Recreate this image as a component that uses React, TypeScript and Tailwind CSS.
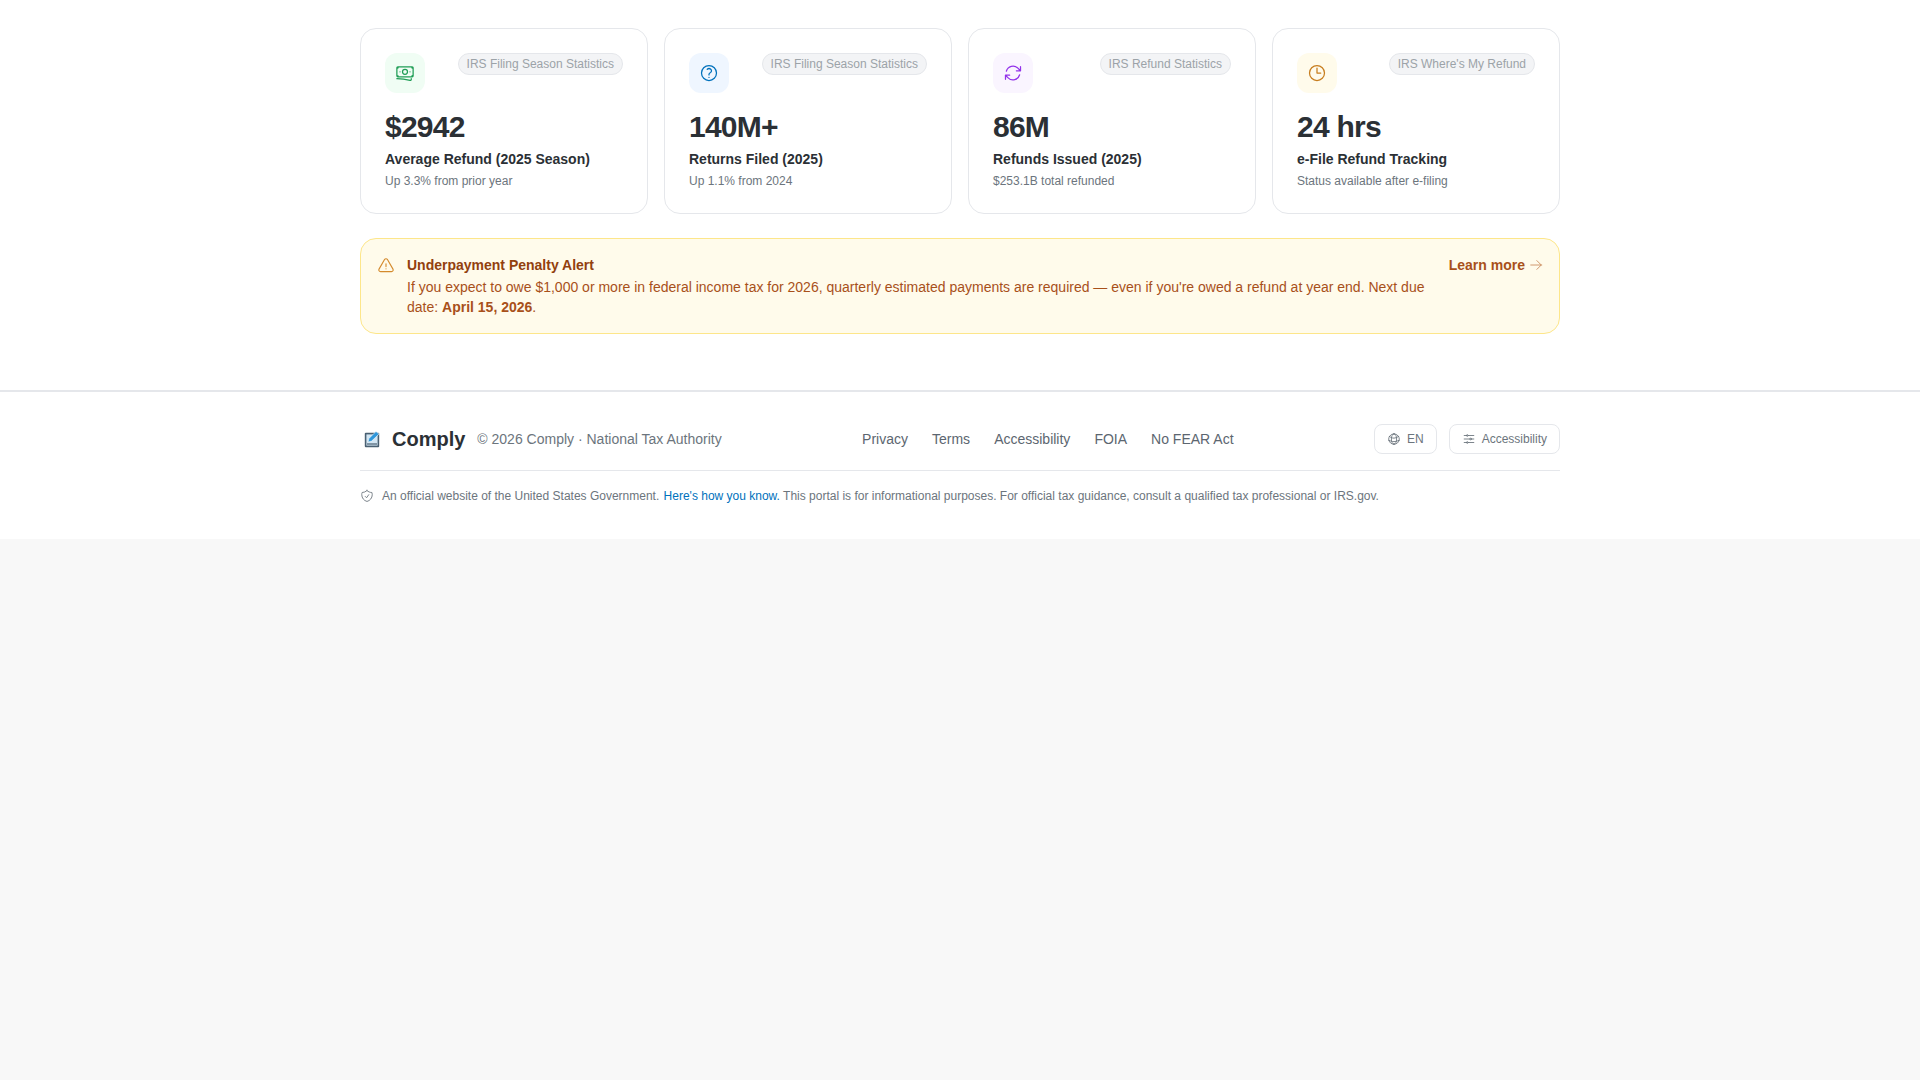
import {
  HiOutlineBanknotes,
  HiOutlineQuestionMarkCircle,
  HiOutlineArrowPath,
  HiOutlineClock,
  HiOutlineExclamationTriangle,
  HiOutlineArrowRight,
  HiOutlineShieldCheck,
  HiOutlineGlobeAlt,
  HiOutlineAdjustmentsHorizontal,
} from "react-icons/hi2";

const stats = [
  {
    icon: <HiOutlineBanknotes className="size-5 text-[#1f9d55]" />,
    tint: "bg-[#f0fdf4]",
    badge: "IRS Filing Season Statistics",
    value: "$2942",
    label: "Average Refund (2025 Season)",
    note: "Up 3.3% from prior year",
  },
  {
    icon: <HiOutlineQuestionMarkCircle className="size-5 text-[#0071bc]" />,
    tint: "bg-[#eff6ff]",
    badge: "IRS Filing Season Statistics",
    value: "140M+",
    label: "Returns Filed (2025)",
    note: "Up 1.1% from 2024",
  },
  {
    icon: <HiOutlineArrowPath className="size-5 text-[#9333ea]" />,
    tint: "bg-[#faf5ff]",
    badge: "IRS Refund Statistics",
    value: "86M",
    label: "Refunds Issued (2025)",
    note: "$253.1B total refunded",
  },
  {
    icon: <HiOutlineClock className="size-5 text-[#c77d1e]" />,
    tint: "bg-[#fffbeb]",
    badge: "IRS Where's My Refund",
    value: "24 hrs",
    label: "e-File Refund Tracking",
    note: "Status available after e-filing",
  },
];

function ComplyLogo() {
  return (
    <svg width="24" height="24" viewBox="0 0 24 24" className="shrink-0">
      <rect x="4.8" y="5.8" width="14.4" height="14.4" rx="1" fill="#4a6072" />
      <rect x="6.4" y="7.4" width="11.2" height="11.2" fill="#d3e6f3" />
      <path d="M7 17h10" stroke="#4a6072" strokeWidth="1.2" />
      <path d="M8 15l1-3.5 7-7 3 2.6-7.4 7z" fill="#2f97db" stroke="#fff" strokeWidth="0.5" />
    </svg>
  );
}

export default function App() {
  return (
    <div className="min-h-screen bg-[#f8f8f8] font-['Liberation_Sans',Arial,sans-serif]">
      <section className="bg-white pt-7 pb-14">
        <div className="mx-auto w-[1200px]">
          <div className="grid grid-cols-4 gap-4">
            {stats.map((s) => (
              <div key={s.value} className="rounded-2xl border border-[#e5e7eb] bg-white p-6">
                <div className="flex items-start justify-between">
                  <div className={`flex size-10 items-center justify-center rounded-xl ${s.tint}`}>{s.icon}</div>
                  <span className="rounded-full border border-[#e5e7eb] bg-[#f3f4f6] px-2 py-[2px] text-xs text-[#9ca3a8]">{s.badge}</span>
                </div>
                <div className="mt-4 text-3xl leading-9 font-bold tracking-tight text-[#2b3035]">{s.value}</div>
                <div className="mt-1 text-sm font-semibold text-[#2b3035]">{s.label}</div>
                <div className="mt-1 text-xs text-[#6c757d]">{s.note}</div>
              </div>
            ))}
          </div>

          <div className="mt-6 flex items-start gap-3 rounded-2xl border border-[#fde68a] bg-[#fffbeb] p-4">
            <HiOutlineExclamationTriangle className="mt-0.5 size-[18px] shrink-0 text-[#d48a2c]" />
            <div className="flex-1 text-sm leading-5 text-[#a8501a]">
              <div className="mb-0.5 font-semibold text-[#92400e]">Underpayment Penalty Alert</div>
              If you expect to owe $1,000 or more in federal income tax for 2026, quarterly estimated payments are required — even if you're owed a refund at year end. Next due date: <strong className="font-semibold">April 15, 2026</strong>.
            </div>
            <a className="flex shrink-0 items-center gap-1 text-sm font-semibold text-[#a8501a]">
              Learn more <HiOutlineArrowRight className="size-3.5 text-[#c98a5c]" />
            </a>
          </div>
        </div>
      </section>

      <footer className="border-t-2 border-[#e5e7eb] bg-white pt-8 pb-[35px]">
        <div className="mx-auto w-[1200px]">
          <div className="flex items-center justify-between border-b border-[#e5e7eb] pb-4">
            <div className="flex items-center gap-3">
              <div className="flex items-center gap-2">
                <ComplyLogo />
                <span className="text-xl font-bold text-[#2b3035]">Comply</span>
              </div>
              <span className="text-sm text-[#6c757d]">© 2026 Comply · National Tax Authority</span>
            </div>
            <nav className="flex items-center gap-6 text-sm text-[#5c6670]">
              <a>Privacy</a>
              <a>Terms</a>
              <a>Accessibility</a>
              <a>FOIA</a>
              <a>No FEAR Act</a>
            </nav>
            <div className="flex items-center gap-3">
              <button className="flex h-[30px] items-center gap-1.5 rounded-lg border border-[#e5e7eb] px-3 text-xs text-[#6c757d]">
                <HiOutlineGlobeAlt className="size-3.5" /> EN
              </button>
              <button className="flex h-[30px] items-center gap-1.5 rounded-lg border border-[#e5e7eb] px-3 text-xs text-[#6c757d]">
                <HiOutlineAdjustmentsHorizontal className="size-3.5" /> Accessibility
              </button>
            </div>
          </div>
          <div className="mt-[17px] flex items-center gap-2 text-xs text-[#6c757d]">
            <HiOutlineShieldCheck className="size-3.5 shrink-0" />
            <p>
              An official website of the United States Government. <a className="ml-px text-[#0071bc]">Here's how you know.</a> This portal is for informational purposes. For official tax guidance, consult a qualified tax professional or IRS.gov.
            </p>
          </div>
        </div>
      </footer>
    </div>
  );
}
